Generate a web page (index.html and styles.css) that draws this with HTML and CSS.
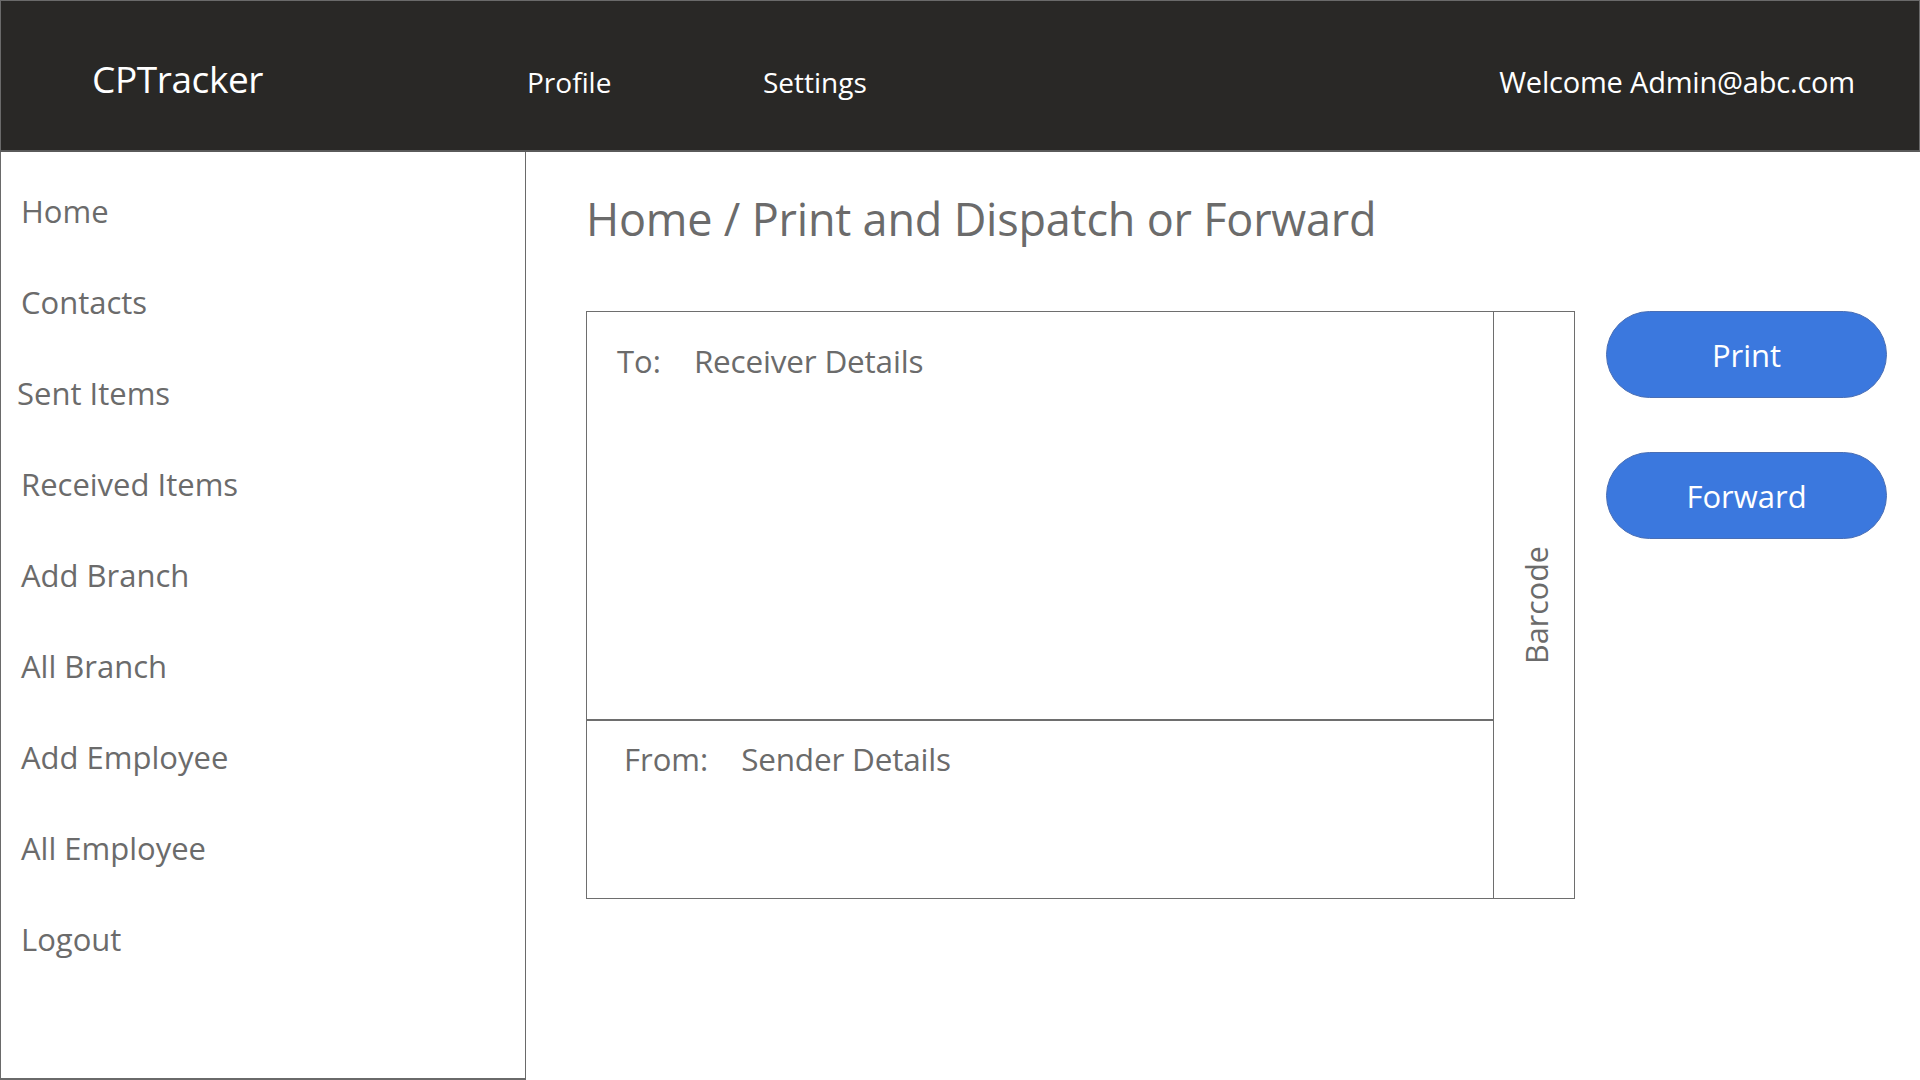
FILE: index.html
```html
<!DOCTYPE html>
<html lang="en">
<head>
<meta charset="utf-8">
<title>CPTracker</title>
<link rel="stylesheet" href="styles.css">
</head>
<body>
<header class="topbar">
  <div class="brand">CPTracker</div>
  <nav class="topnav">
    <span class="topnav-item profile">Profile</span>
    <span class="topnav-item settings">Settings</span>
  </nav>
  <div class="welcome">Welcome Admin@abc.com</div>
</header>
<div class="layout">
  <aside class="sidebar">
    <div class="side-item">Home</div>
    <div class="side-item">Contacts</div>
    <div class="side-item shift-l">Sent Items</div>
    <div class="side-item">Received Items</div>
    <div class="side-item">Add Branch</div>
    <div class="side-item">All Branch</div>
    <div class="side-item">Add Employee</div>
    <div class="side-item">All Employee</div>
    <div class="side-item">Logout</div>
  </aside>
  <main class="main">
    <h1 class="title">Home / Print and Dispatch or Forward</h1>
    <div class="work">
      <div class="label-box">
        <div class="addresses">
          <div class="to-block">
            <span class="field-label">To:</span><span class="field-value">Receiver Details</span>
          </div>
          <div class="from-block">
            <span class="field-label">From:</span><span class="field-value">Sender Details</span>
          </div>
        </div>
        <div class="barcode"><span class="barcode-text">Barcode</span></div>
      </div>
      <div class="actions">
        <button class="btn">Print</button>
        <button class="btn">Forward</button>
      </div>
    </div>
  </main>
</div>
</body>
</html>
```
FILE: styles.css
```css
* { box-sizing: border-box; }
html, body { margin: 0; padding: 0; }
body {
  width: 1920px;
  height: 1080px;
  overflow: hidden;
  background: #ffffff;
  font-family: "Open Sans", "Noto Sans", sans-serif;
}

.topbar {
  height: 152px;
  background: #292826;
  border: 1px solid #6a6a6a;
  border-bottom: 2px solid #5a5a5a;
  display: flex;
  align-items: center;
  color: #ffffff;
  padding-left: 91px;
  padding-right: 64px;
  padding-top: 12px;
}
.brand {
  font-size: 37px;
  width: 435px;
  margin-top: -6px;
  letter-spacing: -0.4px;
}
.topnav { display: flex; flex: 1; }
.topnav-item { font-size: 28px; }
.profile { width: 236px; }
.welcome { font-size: 29px; letter-spacing: -0.2px; }

.layout {
  display: flex;
  height: 928px;
}
.sidebar {
  width: 526px;
  border-left: 1px solid #6a6a6a;
  border-right: 1px solid #6a6a6a;
  border-bottom: 2px solid #6a6a6a;
  padding-top: 13px;
  display: flex;
  flex-direction: column;
}
.side-item {
  height: 91.1px;
  display: flex;
  align-items: center;
  padding-left: 20px;
  font-size: 31px;
  color: #6b6b6b;
}
.shift-l { padding-left: 16px; }

.main {
  flex: 1;
  padding-left: 60px;
}
.title {
  margin: 0;
  padding-top: 36px;
  height: 159px;
  font-weight: 400;
  font-size: 45px;
  color: #6b6b6b;
  letter-spacing: -0.2px;
}
.work {
  display: flex;
  align-items: flex-start;
  gap: 31px;
}
.label-box {
  width: 989px;
  height: 588px;
  border: 1px solid #6e6e6e;
  display: flex;
}
.addresses {
  width: 907px;
  border-right: 1px solid #6e6e6e;
  display: flex;
  flex-direction: column;
}
.to-block {
  height: 409px;
  border-bottom: 2px solid #6e6e6e;
  padding: 27px 0 0 30px;
}
.from-block {
  flex: 1;
  padding: 16px 0 0 37px;
}
.field-label {
  font-size: 31px;
  color: #6b6b6b;
  margin-right: 33px;
}
.from-block .field-label { margin-right: 33px; }
.field-value {
  font-size: 31.5px;
  color: #6b6b6b;
  letter-spacing: -0.2px;
}
.barcode {
  flex: 1;
  display: flex;
  align-items: center;
  justify-content: center;
}
.barcode-text {
  writing-mode: vertical-rl;
  transform: rotate(180deg);
  font-size: 30.5px;
  color: #6b6b6b;
  margin-left: 4px;
}
.actions {
  display: flex;
  flex-direction: column;
  gap: 54px;
}
.btn {
  width: 281px;
  height: 87px;
  border-radius: 44px;
  background: #3b78de;
  border: 1px solid #4a6fb5;
  color: #ffffff;
  font-family: "Open Sans", "Noto Sans", sans-serif;
  font-size: 31px;
  padding: 0;
}
```
